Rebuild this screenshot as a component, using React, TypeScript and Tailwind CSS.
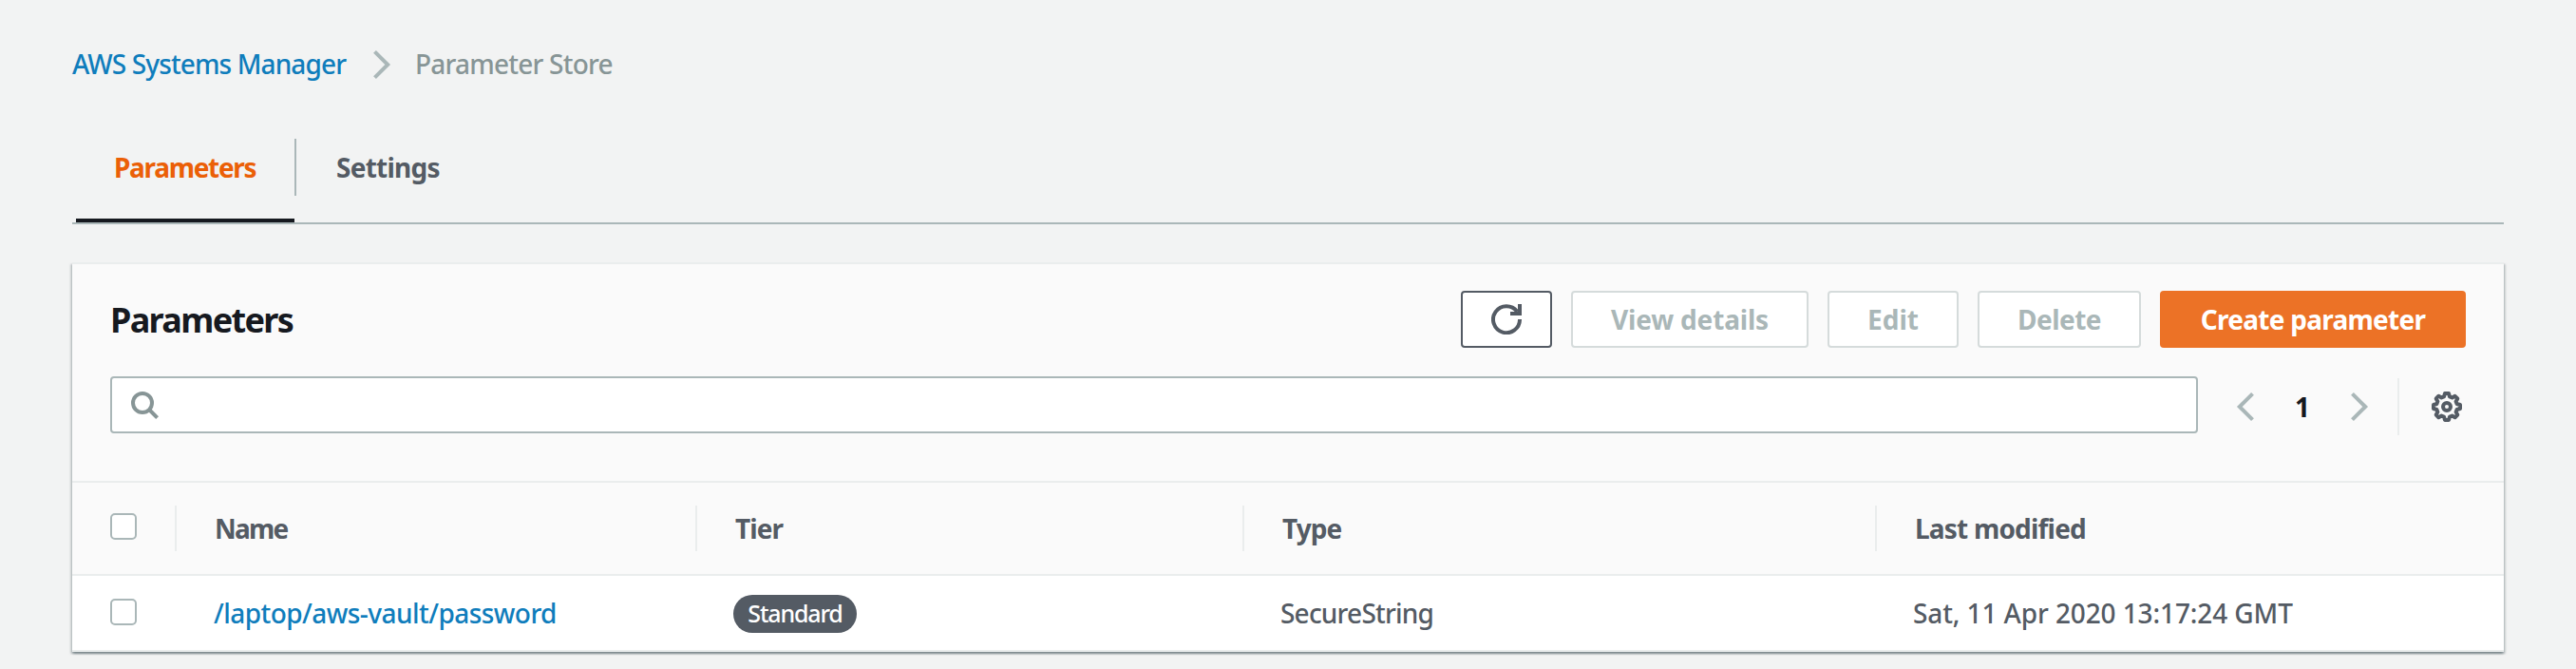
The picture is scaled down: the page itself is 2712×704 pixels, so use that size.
import type { ReactNode } from "react";

function Chevron({ direction }: { direction: "left" | "right" }) {
  return (
    <svg width="32" height="32" viewBox="0 0 32 32" fill="none" stroke="#aab7b8" strokeWidth="4" className="shrink-0">
      {direction === "right" ? <path d="M8.5 2.3 22.2 16 8.5 29.7" /> : <path d="M23.5 2.3 9.8 16l13.7 13.7" />}
    </svg>
  );
}

function SearchIcon() {
  return (
    <svg width="32" height="32" viewBox="0 0 32 32" fill="none" stroke="#879596" strokeWidth="4">
      <circle cx="14" cy="14" r="10" />
      <path d="m21 21 8.6 8.6" />
    </svg>
  );
}

function RefreshIcon() {
  return (
    <svg width="32" height="32" viewBox="0 0 32 32" fill="none" stroke="#545b64" strokeWidth="4">
      <path d="M30 16A14 14 0 1 1 27.2 7.8" />
      <path d="M20 10h10V0" />
      <path d="M23 10 27 6l2 4z" fill="#545b64" stroke="none" />
    </svg>
  );
}

function GearIcon() {
  return (
    <svg width="32" height="32" viewBox="0 0 32 32" fill="none" stroke="#545b64" strokeWidth="4">
      <path
        strokeLinejoin="round"
        d="M14 2h4l1 3.4 2.6 1.1 3-1.7 2.7 2.7-1.7 3L26.6 13l3.4 1v4l-3.4 1-1 2.6 1.7 3-2.7 2.7-3-1.7L19 26.6 18 30h-4l-1-3.4-2.6-1-3 1.7-2.7-2.7 1.7-3L5.4 19 2 18v-4l3.4-1 1-2.6-1.7-3 2.7-2.7 3 1.7L13 5.4z"
      />
      <circle cx="16" cy="16" r="4" />
    </svg>
  );
}

function Checkbox() {
  return <span className="block size-7 rounded-[5px] border-2 border-[#aab7b8] bg-white" />;
}

function DisabledButton({ className, children }: { className: string; children: ReactNode }) {
  return (
    <button
      className={`flex h-[60px] items-center justify-center rounded border-2 border-[#d5dbdb] bg-white pb-px font-bold text-[#aab7b8] ${className}`}
    >
      {children}
    </button>
  );
}

function HeaderCell({ className, label, spacing }: { className: string; label: string; spacing: string }) {
  return (
    <div className={`flex h-12 items-center border-l-2 border-[#eaeded] pl-10 font-bold ${className}`}>
      <span className={spacing}>{label}</span>
    </div>
  );
}

export default function App() {
  return (
    <div className="h-[704px] w-[2712px] overflow-hidden bg-[#f2f3f3] px-[76px] pt-[45px] font-['Noto_Sans','Open_Sans',sans-serif] text-[28px] leading-[44px] font-medium whitespace-nowrap text-[#545b64]">
      <nav className="flex h-11 items-center">
        <a className="w-[310px] tracking-[-0.88px] text-[#0f7dbc]">AWS Systems Manager</a>
        <div className="flex w-[51px] pt-0.5">
          <Chevron direction="right" />
        </div>
        <span className="tracking-[-0.78px] text-[#879596]">Parameter Store</span>
      </nav>

      <div className="mt-[57px] flex h-[90px] border-b-2 border-[#aab7b8] pl-1 font-bold">
        <div className="flex h-[88px] w-[230px] border-b-4 border-[#16191f] pt-2 pl-10 tracking-[-1.31px] text-[#eb5f07]">
          Parameters
        </div>
        <div className="flex h-[60px] items-center border-l-2 border-[#aab7b8] pl-[42px] tracking-[-0.75px]">Settings</div>
      </div>

      <section className="mt-10 h-[410px] border-t-2 border-[#eaeded] bg-[#fafafa] shadow-[0_2px_2px_0_rgba(0,28,36,0.3),2px_2px_2px_0_rgba(0,28,36,0.15),-2px_2px_2px_0_rgba(0,28,36,0.15)]">
        <div className="flex h-[88px] items-end justify-between px-10">
          <h1 className="flex h-[60px] items-center pt-0.5 text-[36px] font-bold tracking-[-1.65px] text-[#16191f]">Parameters</h1>
          <div className="flex gap-5">
            <button className="flex h-[60px] w-24 items-center justify-center rounded border-2 border-[#545b64] bg-white">
              <RefreshIcon />
            </button>
            <DisabledButton className="w-[250px] tracking-[-0.18px]">View details</DisabledButton>
            <DisabledButton className="w-[138px]">Edit</DisabledButton>
            <DisabledButton className="w-[172px] tracking-[-0.54px]">Delete</DisabledButton>
            <button className="flex h-[60px] w-[322px] items-center justify-center rounded bg-[#ec7226] pb-px font-bold tracking-[-0.72px] text-white">
              Create parameter
            </button>
          </div>
        </div>

        <div className="mt-[30px] flex h-[60px] pl-10">
          <div className="flex w-[2198px] items-start rounded border-2 border-[#aab7b8] bg-white pt-3 pl-[18px]">
            <SearchIcon />
          </div>
          <div className="mt-0.5 flex h-[60px] items-center pl-[34px]">
            <Chevron direction="left" />
            <span className="w-[88px] pb-px text-center font-bold text-[#16191f]">1</span>
            <Chevron direction="right" />
            <span className="ml-6 h-[60px] w-0.5 bg-[#eaeded]" />
            <div className="ml-[34px]">
              <GearIcon />
            </div>
          </div>
        </div>

        <div className="mt-[50px] flex h-[100px] items-center border-y-2 border-[#eaeded] pl-10">
          <div className="w-[68px] pb-1">
            <Checkbox />
          </div>
          <HeaderCell className="w-[548px]" label="Name" spacing="tracking-[-1.8px]" />
          <HeaderCell className="w-[576px]" label="Tier" spacing="tracking-[-0.95px]" />
          <HeaderCell className="w-[666px]" label="Type" spacing="tracking-[-0.93px]" />
          <HeaderCell className="w-[662px]" label="Last modified" spacing="tracking-[-0.8px]" />
        </div>

        <div className="flex h-20 items-center border-b-2 border-[#eaeded] bg-white pl-10">
          <div className="w-[109px] pb-0.5">
            <Checkbox />
          </div>
          <a className="w-[547px] tracking-[-0.55px] text-[#0f7dbc]">/laptop/aws-vault/password</a>
          <div className="w-[576px] pt-0.5">
            <span className="flex h-10 w-[130px] items-center justify-center rounded-[20px] bg-[#545b64] pb-0.5 text-[25px] tracking-[-1.16px] text-white">
              Standard
            </span>
          </div>
          <span className="w-[666px] tracking-[-0.79px]">SecureString</span>
          <span className="tracking-[-0.11px]">Sat, 11 Apr 2020 13:17:24 GMT</span>
        </div>
      </section>
    </div>
  );
}
